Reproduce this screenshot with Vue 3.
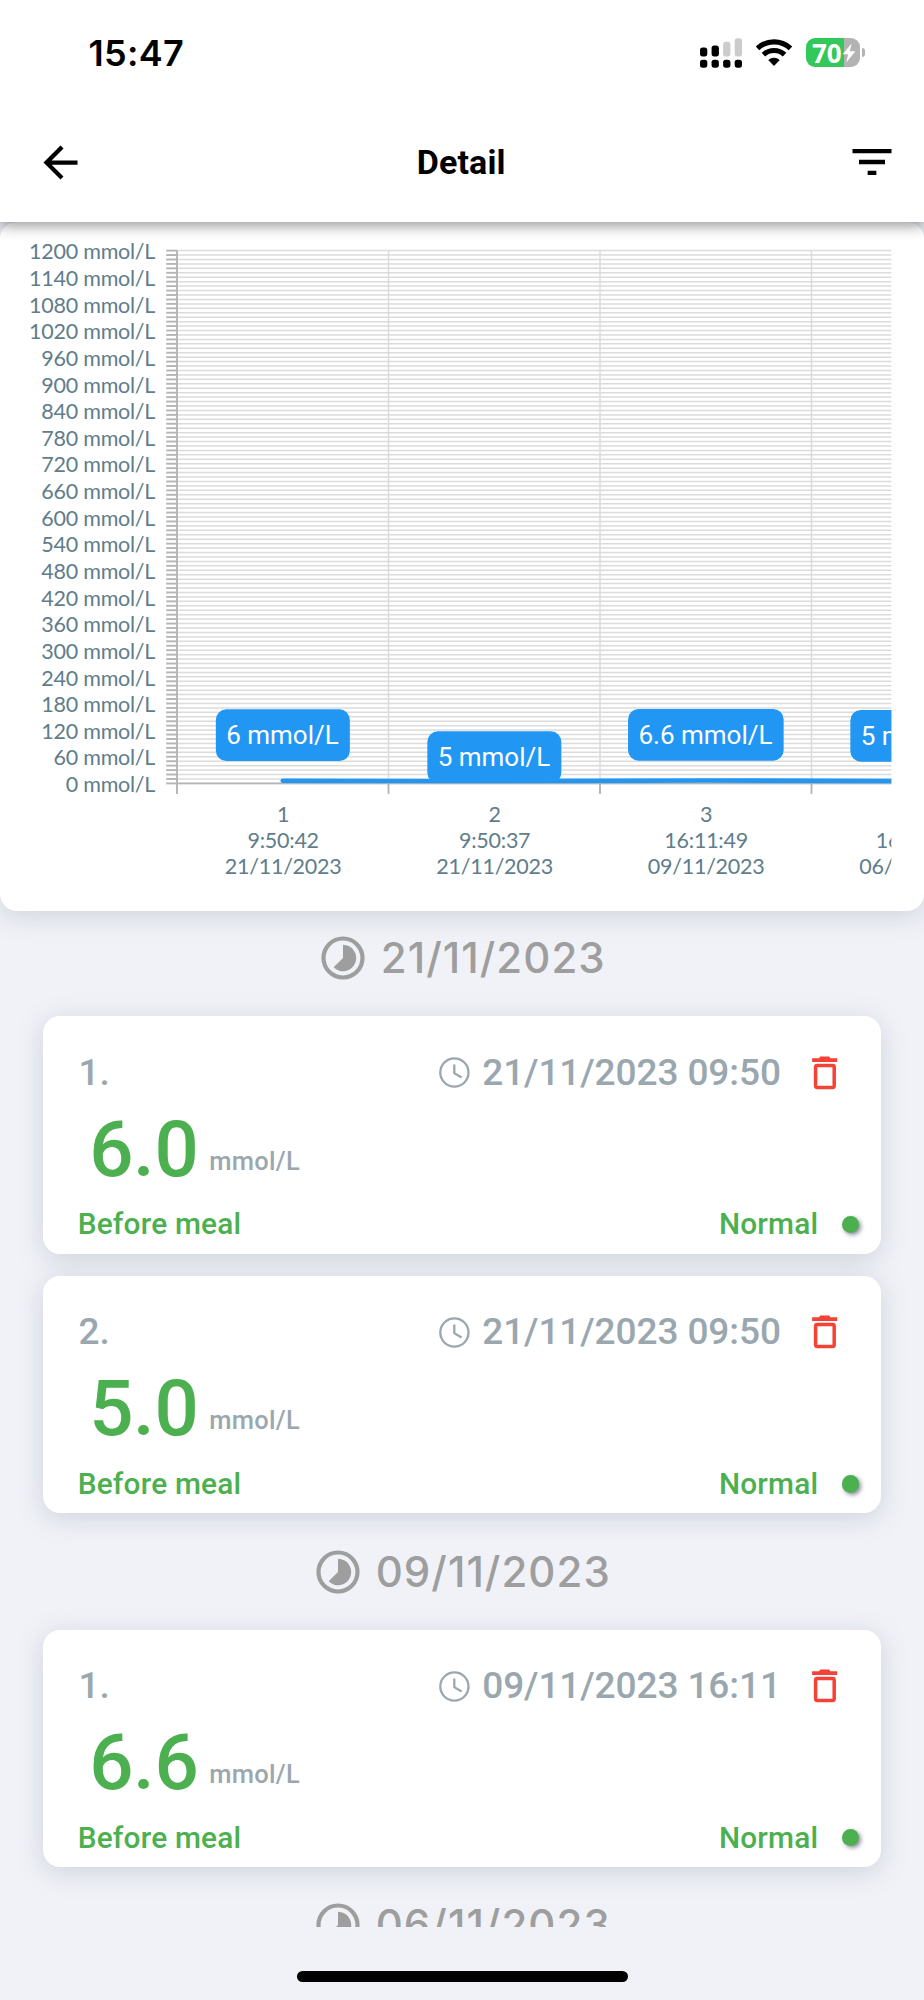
<script setup>
import { computed } from "vue";

const points = [
  { value: 6, label: "6 mmol/L", time: "9:50:42", date: "21/11/2023", boxY: 487.3, boxW: 134 },
  { value: 5, label: "5 mmol/L", time: "9:50:37", date: "21/11/2023", boxY: 509.3, boxW: 134 },
  { value: 6.6, label: "6.6 mmol/L", time: "16:11:49", date: "09/11/2023", boxY: 487, boxW: 155.6 },
  { value: 5, label: "5 mmol/L", time: "16:11:31", date: "06/11/2023", boxY: 488, boxW: 134 },
];

const groups = [
  {
    date: "21/11/2023",
    items: [
      { value: "6.0", time: "21/11/2023 09:50" },
      { value: "5.0", time: "21/11/2023 09:50" },
    ],
  },
  { date: "09/11/2023", items: [{ value: "6.6", time: "09/11/2023 16:11" }] },
  { date: "06/11/2023", items: [] },
];

// chart geometry
const left = 177;
const right = 891.4;
const top = 28.6;
const bottom = 561.4;
const colWidth = 211.5;
const maxValue = 1200;

const yOf = (value) => bottom - (value / maxValue) * (bottom - top);

const gridValues = computed(() => Array.from({ length: 121 }, (_, i) => i * 10));
const labelValues = computed(() => gridValues.value.filter((v) => v % 60 === 0));
const columns = computed(() =>
  points.map((p, i) => ({ ...p, x: left + i * colWidth, cx: left + (i + 0.5) * colWidth }))
);
const linePath = computed(
  () => "M" + columns.value.map((c) => `${c.cx} ${yOf(c.value)}`).join(" L")
);
</script>

<template>
  <div class="screen">
    <header class="header">
      <div class="status">
        <span class="clock">15:47</span>
        <div class="status-icons">
          <svg class="signal" width="42" height="30" viewBox="0 0 42 30">
            <rect x="0" y="9.4" width="7.3" height="9" rx="2.6" />
            <rect x="11.6" y="7.6" width="7.3" height="10.8" rx="2.6" />
            <rect class="off" x="23.1" y="3.8" width="7.3" height="14.6" rx="2.6" />
            <rect class="off" x="34.7" y="0.2" width="7.3" height="18.2" rx="2.6" />
            <rect v-for="i in 4" :key="i" :x="(i - 1) * 11.56" y="21.7" width="7.3" height="8" rx="2.6" />
          </svg>
          <svg class="wifi" width="36" height="27" viewBox="0 0 36 27">
            <path d="M1.5 9.3A24.2 24.2 0 0 1 34.5 9.3" />
            <path d="M7.4 15.7A15.5 15.5 0 0 1 28.6 15.7" />
            <path class="fill" d="M18 26.4L12.8 21.1A8 8 0 0 1 23.2 21.1Z" />
          </svg>
          <div class="battery">
            <div class="battery-body">
              <span>70</span>
              <svg width="14" height="20" viewBox="0 0 14 20">
                <path d="M9.6 0.4L0.6 11.2H6.2L4.2 19.6L13.4 8.2H7.8Z" />
              </svg>
            </div>
            <div class="battery-cap"></div>
          </div>
        </div>
      </div>
      <div class="bar">
        <svg width="51" height="51" viewBox="0 0 24 24">
          <path d="M20 11H7.83l5.59-5.59L12 4l-8 8 8 8 1.41-1.41L7.83 13H20v-2z" />
        </svg>
        <h1>Detail</h1>
        <svg width="52" height="52" viewBox="0 0 24 24">
          <path d="M10 18h4v-2h-4v2zM3 6v2h18V6H3zm3 7h12v-2H6v2z" />
        </svg>
      </div>
    </header>

    <section class="chart-card">
      <svg class="chart" width="924" height="688" viewBox="0 0 924 688">
        <defs>
          <clipPath id="scroll-area">
            <rect x="0" y="0" :width="right" height="689" />
          </clipPath>
          <clipPath id="plot-area">
            <rect :x="left" :y="top" :width="right - left" :height="bottom - top" />
          </clipPath>
        </defs>
        <g class="y-labels">
          <text v-for="v in labelValues" :key="v" x="155.1" :y="yOf(v) + 8.7">{{ v }} mmol/L</text>
        </g>
        <g class="grid">
          <line v-for="v in gridValues" :key="v" :x1="left" :x2="right" :y1="yOf(v)" :y2="yOf(v)" />
          <line v-for="c in columns.slice(1)" :key="c.x" :x1="c.x" :x2="c.x" :y1="top" :y2="bottom" />
        </g>
        <g class="axis">
          <line v-for="v in gridValues" :key="v" x1="166.2" :x2="left" :y1="yOf(v)" :y2="yOf(v)" />
          <line :x1="left" :x2="left" :y1="top" :y2="bottom + 10.5" />
          <line :x1="left" :x2="right" :y1="bottom" :y2="bottom" />
          <line
            v-for="c in columns.slice(1)"
            :key="c.x"
            :x1="c.x"
            :x2="c.x"
            :y1="bottom"
            :y2="bottom + 10.5"
          />
        </g>
        <g clip-path="url(#plot-area)">
          <path class="series" :d="linePath" />
          <g v-for="c in columns" :key="c.cx">
            <rect
              class="tip"
              :x="c.cx + 0.1 - c.boxW / 2"
              :y="c.boxY"
              :width="c.boxW"
              height="51.7"
              rx="10.5"
            />
            <text class="tip-text" :x="c.cx - 0.3" :y="c.boxY + 34.7">{{ c.label }}</text>
          </g>
        </g>
        <g class="x-labels" clip-path="url(#scroll-area)">
          <g v-for="(c, i) in columns" :key="c.cx">
            <text :x="c.cx + 0.4" y="600.3">{{ i + 1 }}</text>
            <text :x="c.cx + 0.4" y="626">{{ c.time }}</text>
            <text :x="c.cx + 0.4" y="652">{{ c.date }}</text>
          </g>
        </g>
      </svg>
    </section>

    <main class="list">
      <section v-for="group in groups" :key="group.date" class="group">
        <h2>
          <svg width="44" height="44" viewBox="-22 -22 44 44">
            <circle class="ring" r="19.5" />
            <path d="M0 0V-13.2A13.2 13.2 0 1 1 -9.33 9.33Z" />
          </svg>
          <span>{{ group.date }}</span>
        </h2>
        <article v-for="(item, i) in group.items" :key="i" class="card">
          <div class="row top-row">
            <span class="index">{{ i + 1 }}.</span>
            <svg class="time-icon" width="31" height="31" viewBox="0 0 31 31">
              <circle cx="15.4" cy="15.5" r="14.1" />
              <path d="M15.3 7.6V16.2L22.6 20.6" />
            </svg>
            <span class="time">{{ item.time }}</span>
            <svg class="trash" width="26" height="34" viewBox="0 0 26 34">
              <path d="M0.1 2.2H7L8.2 0.6H17.2L18.4 2.2H25.2V6H0.1Z" />
              <rect x="3.6" y="9.6" width="18.6" height="21.8" rx="1.6" />
            </svg>
          </div>
          <div class="row value-row">
            <span class="value">{{ item.value }}</span>
            <span class="unit">mmol/L</span>
          </div>
          <div class="row state-row">
            <span>Before meal</span>
            <span class="state">Normal</span>
            <i class="dot"></i>
          </div>
        </article>
      </section>
    </main>

    <footer class="footer">
      <div class="home"></div>
    </footer>
  </div>
</template>

<style>
body {
  margin: 0;
  background: #f1f2f8;
}
</style>

<style scoped>
.screen {
  display: flex;
  flex-direction: column;
  width: 924px;
  height: 2000px;
  overflow: hidden;
  background: #f1f2f8;
  font-family: Roboto, sans-serif;
}

.header {
  position: relative;
  z-index: 3;
  flex: none;
  height: 222px;
  background: #fff;
  box-shadow: 0 4px 13px rgba(0, 0, 0, 0.4);
}

/* status bar */
.status {
  display: flex;
  align-items: center;
  justify-content: space-between;
  box-sizing: border-box;
  height: 102px;
  padding: 3px 59px 0 88.5px;
}

.clock {
  font: 600 36px/40px Inter, sans-serif;
  letter-spacing: 0.3px;
}

.status-icons {
  display: flex;
  align-items: center;
}

.signal .off {
  fill: #ccc;
}

.wifi {
  margin-left: 14px;
  fill: none;
  stroke: #000;
  stroke-width: 5.2;
}

.wifi .fill {
  fill: #000;
  stroke-width: 1;
  stroke-linejoin: round;
}

.battery {
  display: flex;
  align-items: center;
  margin-left: 14px;
}

.battery-body {
  display: flex;
  align-items: center;
  box-sizing: border-box;
  width: 54px;
  height: 29.6px;
  padding-left: 6px;
  border-radius: 9px;
  background: linear-gradient(90deg, #34c759 38px, #b3b3b3 38px);
  color: #fff;
  font: 700 26px/30px "Open Sans", sans-serif;
}

.battery-body span {
  width: 30px;
}

.battery-body path {
  fill: #fff;
}

.battery-cap {
  width: 3px;
  height: 9px;
  margin-left: 2px;
  border-radius: 0 4px 4px 0;
  background: #b3b3b3;
}

/* app bar */
.bar {
  display: flex;
  align-items: center;
  justify-content: space-between;
  height: 120px;
  padding: 0 26px 0 34.5px;
}

.bar h1 {
  margin: 0 9px 0 0;
  font-size: 34px;
  font-weight: 700;
  line-height: 40px;
  letter-spacing: 0.1px;
}

/* chart */
.chart-card {
  position: relative;
  z-index: 2;
  flex: none;
  height: 689px;
  border-radius: 17px;
  background: #fff;
  box-shadow: 0 5px 26px rgba(100, 120, 135, 0.25);
}

.chart {
  display: block;
}

.y-labels,
.x-labels {
  font: 400 21.5px Lato, sans-serif;
  letter-spacing: -0.25px;
  fill: #607d8b;
}

.y-labels {
  text-anchor: end;
}

.x-labels,
.tip-text {
  text-anchor: middle;
}

.grid line {
  stroke: #dbdbdb;
  stroke-width: 1.5;
}

.axis line {
  stroke: #b5b5b5;
  stroke-width: 1.9;
}

.series {
  fill: none;
  stroke: #2196f3;
  stroke-width: 4.6;
  stroke-linecap: round;
}

.tip {
  fill: #2196f3;
}

.tip-text {
  fill: #fff;
  font-size: 26px;
}

/* list */
.list {
  flex: none;
  height: 1015.5px;
  overflow: hidden;
}

h2 {
  display: flex;
  align-items: center;
  justify-content: center;
  gap: 15.5px;
  height: 94.7px;
  margin: 0;
  padding-left: 3px;
  color: #9e9e9e;
  fill: #9e9e9e;
  font: 500 42px/48px Inter, sans-serif;
  letter-spacing: 1.05px;
}

h2 .ring {
  fill: none;
  stroke: #9e9e9e;
  stroke-width: 4.2;
}

.card {
  box-sizing: border-box;
  height: 237.6px;
  margin: 10.8px 43.2px;
  padding-top: 36.5px;
  border-radius: 17px;
  background: #fff;
  box-shadow: 0 5px 26px rgba(100, 120, 135, 0.25);
  color: #9aa7af;
  font-weight: 500;
}

.card + .card {
  margin-top: 21.7px;
}

.group {
  display: flow-root;
}

.row {
  display: flex;
  align-items: center;
}

.top-row {
  height: 40px;
  padding: 0 43px 0 35.3px;
  font-size: 37px;
  line-height: 40px;
  letter-spacing: -0.1px;
}

.time-icon {
  margin: 0 12px 0 auto;
  fill: none;
  stroke: #9aa7af;
  stroke-width: 2.3;
}

.trash {
  margin-left: 31px;
  fill: #f44336;
}

.trash rect {
  fill: none;
  stroke: #f44336;
  stroke-width: 3.5;
}

.value-row {
  height: 80px;
  margin-top: 17px;
  padding-left: 46px;
}

.value {
  color: #4caf50;
  font-size: 78px;
  line-height: 80px;
  letter-spacing: -0.4px;
}

.unit {
  padding: 22px 0 0 11px;
  font-size: 25.5px;
  line-height: 30px;
  letter-spacing: 0.25px;
}

.state-row {
  height: 40px;
  margin-top: 14.5px;
  padding: 0 21.5px 0 34.5px;
  color: #4caf50;
  font-size: 29.8px;
  line-height: 40px;
  letter-spacing: 0.2px;
}

.state {
  margin-left: auto;
}

.dot {
  width: 17.5px;
  height: 17.5px;
  margin-left: 23.5px;
  border-radius: 50%;
  background: #4caf50;
  box-shadow: 2px 2px 4px rgba(60, 60, 90, 0.6);
}

/* home indicator */
.footer {
  display: flex;
  justify-content: center;
  padding-top: 44.5px;
}

.home {
  width: 331px;
  height: 11.3px;
  border-radius: 6px;
  background: #000;
}
</style>
